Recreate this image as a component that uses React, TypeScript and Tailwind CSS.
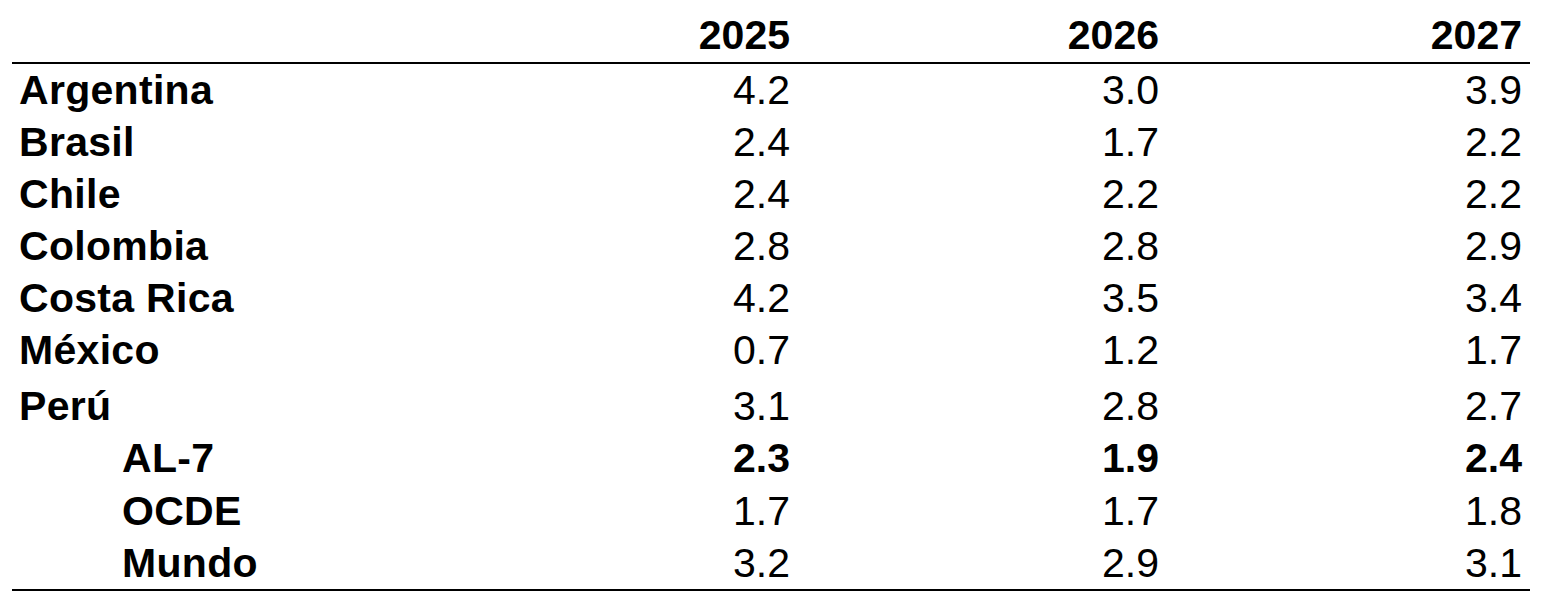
const rows = [
  { label: "Argentina", values: ["4.2", "3.0", "3.9"] },
  { label: "Brasil", values: ["2.4", "1.7", "2.2"] },
  { label: "Chile", values: ["2.4", "2.2", "2.2"] },
  { label: "Colombia", values: ["2.8", "2.8", "2.9"] },
  { label: "Costa Rica", values: ["4.2", "3.5", "3.4"] },
  { label: "México", values: ["0.7", "1.2", "1.7"] },
  { label: "Perú", values: ["3.1", "2.8", "2.7"], rowClass: "h-[56px] pt-[4px]" },
  { label: "AL-7", values: ["2.3", "1.9", "2.4"], indent: true, bold: true, rowClass: "h-[53px]" },
  { label: "OCDE", values: ["1.7", "1.7", "1.8"], indent: true },
  { label: "Mundo", values: ["3.2", "2.9", "3.1"], indent: true },
];

const years = ["2025", "2026", "2027"];
const cols = "grid grid-cols-[411px_375px_369px_363px]";

export default function App() {
  return (
    <div
      className="min-h-[613px] w-[1563px] bg-white pt-[9px] text-[41px] leading-[52px] text-black"
      style={{ fontFamily: '"Liberation Sans", Arial, sans-serif' }}
    >
      <div className="ml-[12px] w-[1518px]">
        {/* encabezado */}
        <div className={`${cols} h-[55px] border-b-2 border-black font-bold`}>
          <div />
          {years.map((y) => (
            <div key={y} className="pr-[8px] text-right">
              {y}
            </div>
          ))}
        </div>

        {rows.map((r) => (
          <div key={r.label} className={`${cols} ${r.rowClass ?? "h-[52px]"}`}>
            <div className={`font-bold tracking-[0.3px] ${r.indent ? "pl-[110px]" : "pl-[7px]"}`}>{r.label}</div>
            {r.values.map((v, i) => (
              <div key={i} className={`pr-[8px] text-right ${r.bold ? "font-bold" : ""}`}>
                {v}
              </div>
            ))}
          </div>
        ))}

        <div className="h-[2px] bg-black" />
      </div>
    </div>
  );
}
